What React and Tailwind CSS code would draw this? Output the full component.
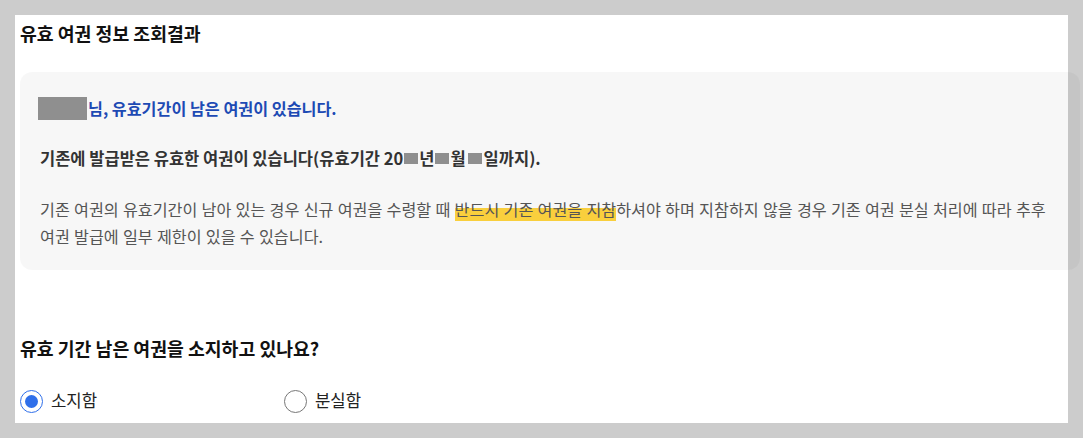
import React from 'react';

const FONT = { fontFamily: '"Noto Sans CJK KR", "Noto Sans", sans-serif' };

function Masked({ className = "" }) {
  return <span className={`inline-block bg-[#8f8f8f] ${className}`} />;
}

function Radio({ checked, label, className = "" }) {
  return (
    <label className={`flex items-center gap-[8px] h-[24px] ${className}`}>
      {checked ? (
        <span className="w-[23px] h-[23px] rounded-full border-[1.5px] border-[#2f6fea] flex items-center justify-center">
          <span className="w-[13px] h-[13px] rounded-full bg-[#2f6fea]" />
        </span>
      ) : (
        <span className="w-[23px] h-[23px] rounded-full border border-[#777]" />
      )}
      <span className="text-[16.7px] text-[#222]">{label}</span>
    </label>
  );
}

export default function App() {
  return (
    <div className="min-h-screen bg-[#cccccc] p-[15px]" style={FONT}>
      <div className="bg-white h-[408px] pl-[5px] pt-[6px]">
        {/* TITLE */}
        <h2 className="text-[18.3px] leading-[24px] font-bold text-[#111]">유효 여권 정보 조회결과</h2>

        {/* INFO BOX */}
        <div className="mt-[27px] w-[1060px] rounded-[12px] bg-black/[0.03] pl-[18px] pr-[14px] pt-[24px] pb-[20px]">
          <div className="flex items-center h-[24px] text-[16.2px] font-bold text-[#1d4ab4]">
            <Masked className="w-[49px] h-[23px]" />
            <span className="ml-[1px]">님, 유효기간이 남은 여권이 있습니다.</span>
          </div>

          <p className="mt-[26px] pl-[2px] h-[24px] flex items-center text-[16.5px] font-bold text-[#333] whitespace-pre">
            기존에 발급받은 유효한 여권이 있습니다(유효기간 20
            <Masked className="w-[14px] h-[11px] mx-[1px]" />년
            <Masked className="w-[14px] h-[11px] mx-[1px]" />월
            <Masked className="w-[14px] h-[11px] mx-[2px]" />일까지).
          </p>

          <p className="mt-[26px] pl-[2px] text-[16.2px] leading-[27px] text-[#555] break-keep [word-spacing:0.6px]">
            기존 여권의 유효기간이 남아 있는 경우 신규 여권을 수령할 때{" "}
            <span className="bg-[linear-gradient(transparent_45%,#f9cf3d_45%)]">반드시 기존 여권을 지참</span>
            하셔야 하며 지참하지 않을 경우 기존 여권 분실 처리에 따라 추후 여권 발급에 일부 제한이 있을 수 있습니다.
          </p>
        </div>

        {/* QUESTION */}
        <h3 className="mt-[66px] text-[18.3px] leading-[24px] font-bold text-[#111]">유효 기간 남은 여권을 소지하고 있나요?</h3>

        <div className="mt-[29px] flex items-center">
          <Radio checked label="소지함" className="w-[264px]" />
          <Radio label="분실함" />
        </div>
      </div>
    </div>
  );
}
